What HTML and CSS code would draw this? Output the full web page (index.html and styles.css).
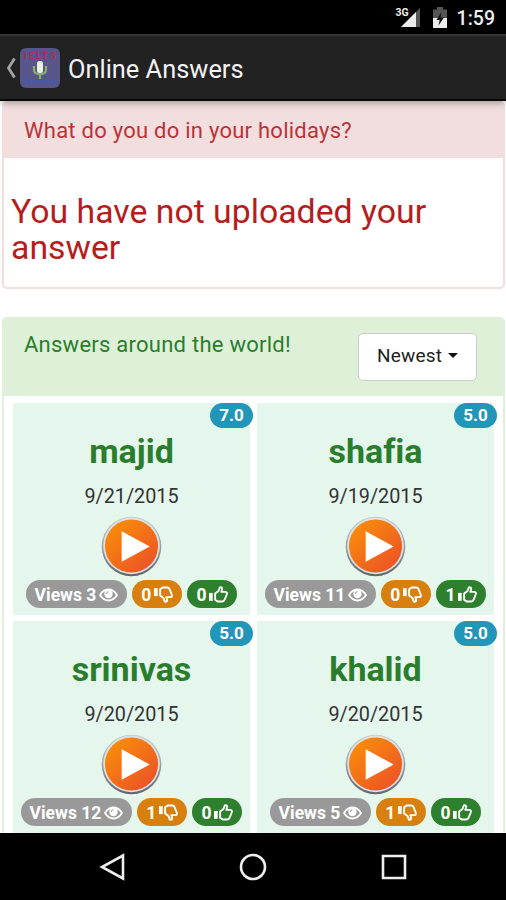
FILE: index.html
```
<!DOCTYPE html>
<html lang="en">
  <head>
    <meta charset="UTF-8" />
    <meta name="viewport" content="width=device-width, initial-scale=1.0" />
    <title>Online Answers</title>
    <link rel="stylesheet" href="styles.css">
  </head>
  <body>
    <!-- Shared icons -->
    <svg class="icon-defs" width="0" height="0">
      <defs>
        <linearGradient id="orange" x1="0.15" y1="0.1" x2="0.85" y2="0.9">
          <stop offset="0" stop-color="#f98c0a" />
          <stop offset="1" stop-color="#ec5426" />
        </linearGradient>
        <linearGradient id="rim" x1="0" y1="0" x2="0" y2="1">
          <stop offset="0" stop-color="#c3ccd0" />
          <stop offset="0.5" stop-color="#9a9fa3" />
          <stop offset="1" stop-color="#606468" />
        </linearGradient>
      </defs>
      <symbol id="play" viewBox="0 0 62 62">
        <circle cx="31" cy="31" r="30.3" fill="url(#rim)" />
        <circle cx="31" cy="30.3" r="28.8" fill="#dde1e5" />
        <circle cx="31" cy="30.5" r="27" fill="url(#orange)" />
        <path d="M21 15.500v31L49.500 31z" fill="#fff" />
      </symbol>
      <symbol id="eye" viewBox="0 0 19 14">
        <path d="M1 7Q4.500 1.500 9.500 1.500T18 7Q14.500 12.500 9.500 12.500T1 7z" fill="none" stroke="#fff" stroke-width="1.800" />
        <circle cx="9.500" cy="6" r="4.200" fill="#fff" />
        <path d="M7.300 6Q7.300 3.900 9.400 3.700" fill="none" stroke="#999" stroke-width="1" />
      </symbol>
      <symbol id="thumb" viewBox="0 0 18 16">
        <path d="M0 6.500h3.500v7.500H0z" fill="#fff" />
        <path d="M5.800 7L9 4.700 10.300 1.200Q12.900 0.700 12.400 3.300L11.700 5.500H15.700Q17.500 5.800 16.800 8L14.700 13Q14.200 14.700 12.500 14.700H8.500L5.800 13z" fill="none" stroke="#fff" stroke-width="1.800" stroke-linejoin="round" />
      </symbol>
    </svg>

    <div class="status-bar">
      <span class="network">3G</span>
      <svg class="signal" width="20" height="19" viewBox="0 0 20 19">
        <path d="M19 0v19H0z" fill="#555" />
        <path d="M15 4v15H0z" fill="#eee" />
      </svg>
      <svg class="battery" width="14" height="21" viewBox="0 0 14 21">
        <path d="M0 2.500h4V0h6v2.500h4V11H0z" fill="#555" />
        <path d="M0 11h14v10H0z" fill="#eee" />
        <path d="M8.500 5L3.500 13h3.200L5.500 18.500 11 10.500H7.500z" fill="#111" />
      </svg>
      <span class="clock">1:59</span>
    </div>

    <div class="app-bar">
      <svg class="back" width="11" height="22" viewBox="0 0 11 22">
        <path d="M9.500 1.500L3.500 11l6 9.500" fill="none" stroke="#a5a5a5" stroke-width="2.800" />
      </svg>
      <div class="logo">
        <span class="logo-text">IELTS</span>
        <svg width="16" height="18" viewBox="0 0 16 18">
          <path d="M2 5v4q0 4 6 4t6-4V5M8 13v5" fill="none" stroke="#86b55f" stroke-width="2.200" />
          <rect x="5" y="0" width="6" height="12" rx="2.500" fill="#eef0dc" />
        </svg>
        <span class="logo-sub">Speaking</span>
      </div>
      <h1>Online Answers</h1>
    </div>

    <div class="content">
      <div class="panel panel-danger">
        <div class="panel-heading">What do you do in your holidays?</div>
        <p class="message">You have not uploaded your answer</p>
      </div>

      <div class="panel panel-success">
        <div class="panel-heading">
          <span>Answers around the world!</span>
          <button class="sort-button">Newest <span class="caret"></span></button>
        </div>
        <div class="answers">
          <div class="answer">
            <span class="score">7.0</span>
            <h2>majid</h2>
            <span class="date">9/21/2015</span>
            <svg class="play"><use href="#play" /></svg>
            <div class="badges">
              <span class="badge views">Views 3 <svg class="eye"><use href="#eye" /></svg></span>
              <span class="badge dislikes">0 <svg class="thumb down"><use href="#thumb" /></svg></span>
              <span class="badge likes">0 <svg class="thumb"><use href="#thumb" /></svg></span>
            </div>
          </div>
          <div class="answer">
            <span class="score">5.0</span>
            <h2>shafia</h2>
            <span class="date">9/19/2015</span>
            <svg class="play"><use href="#play" /></svg>
            <div class="badges">
              <span class="badge views">Views 11 <svg class="eye"><use href="#eye" /></svg></span>
              <span class="badge dislikes">0 <svg class="thumb down"><use href="#thumb" /></svg></span>
              <span class="badge likes">1 <svg class="thumb"><use href="#thumb" /></svg></span>
            </div>
          </div>
          <div class="answer">
            <span class="score">5.0</span>
            <h2>srinivas</h2>
            <span class="date">9/20/2015</span>
            <svg class="play"><use href="#play" /></svg>
            <div class="badges">
              <span class="badge views">Views 12 <svg class="eye"><use href="#eye" /></svg></span>
              <span class="badge dislikes">1 <svg class="thumb down"><use href="#thumb" /></svg></span>
              <span class="badge likes">0 <svg class="thumb"><use href="#thumb" /></svg></span>
            </div>
          </div>
          <div class="answer">
            <span class="score">5.0</span>
            <h2>khalid</h2>
            <span class="date">9/20/2015</span>
            <svg class="play"><use href="#play" /></svg>
            <div class="badges">
              <span class="badge views">Views 5 <svg class="eye"><use href="#eye" /></svg></span>
              <span class="badge dislikes">1 <svg class="thumb down"><use href="#thumb" /></svg></span>
              <span class="badge likes">0 <svg class="thumb"><use href="#thumb" /></svg></span>
            </div>
          </div>
        </div>
      </div>
    </div>

    <div class="nav-bar">
      <svg width="28" height="28" viewBox="0 0 28 28"><path d="M24 2.500v23L3 14z" /></svg>
      <svg width="28" height="28" viewBox="0 0 28 28"><circle cx="14" cy="14" r="12" /></svg>
      <svg width="28" height="28" viewBox="0 0 28 28"><path d="M4 3h22v22H4z" /></svg>
    </div>
  </body>
</html>
```
FILE: styles.css
```
* {
  box-sizing: border-box;
}

body {
  margin: 0;
  height: 900px;
  display: flex;
  flex-direction: column;
  overflow: hidden;
  font-family: Roboto, sans-serif;
  font-variant-ligatures: none;
  background: #fff;
}

.icon-defs {
  position: absolute;
}

.status-bar {
  height: 34px;
  flex: none;
  background: #000;
  color: #eee;
  display: flex;
  justify-content: flex-end;
  align-items: flex-start;
  padding: 7px 11px 0 0;
}

.network {
  font-size: 10.5px;
  font-weight: bold;
  line-height: 11px;
  margin-right: -8px;
  z-index: 1;
}

.signal {
  margin-top: 1px;
}

.battery {
  margin: 0 10px 0 12px;
}

.clock {
  font-size: 19.5px;
  font-weight: 500;
  line-height: 24px;
}

.app-bar {
  height: 67px;
  flex: none;
  display: flex;
  align-items: center;
  padding: 0 5px;
  background: #222;
  border-top: 2px solid #343434;
  border-bottom: 2px solid #090909;
  z-index: 1;
  box-shadow: 0 1px 8px rgba(0, 0, 0, 0.4);
}

.app-bar h1 {
  margin: 2px 0 0 8px;
  color: #f3f3f3;
  font-size: 25.4px;
  font-weight: normal;
}

.logo {
  width: 40px;
  height: 40px;
  margin-left: 4px;
  border-radius: 6px;
  background: #58558a;
  display: flex;
  flex-direction: column;
  align-items: center;
  padding-top: 4px;
}

.logo-text {
  color: #b52a55;
  font-size: 9px;
  font-weight: bold;
  line-height: 9px;
  letter-spacing: 2.2px;
  margin-right: -2px;
}

.logo-sub {
  color: #3f5cae;
  font-size: 8px;
  font-weight: bold;
  line-height: 8px;
  margin-top: -2px;
}

.content {
  flex: 1;
  min-height: 0;
  padding: 0 1px 0 2px;
  overflow: hidden;
}

.panel {
  border: 2px solid #f2dede;
  border-radius: 5px;
  background: #fff;
  overflow: hidden;
}

.panel-heading {
  font-size: 22px;
  letter-spacing: 0.25px;
  line-height: 26px;
  padding: 15px 20px;
}

.panel-danger {
  height: 188px;
  margin-bottom: 28px;
  color: #b71c1c;
}

.panel-danger .panel-heading {
  height: 55px;
  background: #f2dede;
  color: #b93338;
}

.message {
  margin: 36px 7px 0;
  font-size: 33.8px;
  line-height: 36px;
}

.panel-success {
  height: 600px;
  border-color: #dff0d8;
  color: #2a7d2d;
}

.panel-success .panel-heading {
  height: 77px;
  display: flex;
  justify-content: space-between;
  align-items: flex-start;
  padding: 13px 26px 0 20px;
  background: #dff0d8;
}

.sort-button {
  width: 119px;
  height: 48px;
  margin-top: 1px;
  display: flex;
  justify-content: center;
  align-items: center;
  gap: 6px;
  padding: 0 0 3px;
  border: 1px solid #ccc;
  border-radius: 5px;
  background: #fff;
  color: #222;
  font-family: inherit;
  font-size: 19px;
  letter-spacing: 0.2px;
}

.caret {
  border: 5px solid transparent;
  border-top-color: #111;
  border-bottom: 0;
}

.answers {
  display: grid;
  grid-template-columns: 237px 237px;
  grid-auto-rows: 212px;
  gap: 6px 7px;
  padding: 7px 9px;
}

.answer {
  position: relative;
  display: flex;
  flex-direction: column;
  align-items: center;
  background: #e5f6ec;
}

/* score hangs over the right edge of the card */
.score {
  position: absolute;
  top: 0;
  right: -3px;
  width: 43px;
  height: 25px;
  border-radius: 13px;
  background: #2196b9;
  color: #fff;
  font-size: 17px;
  font-weight: bold;
  line-height: 25px;
  text-align: center;
}

.answer h2 {
  margin: 27px 0 0;
  font-size: 34px;
  line-height: 42px;
}

.date {
  margin-top: 13px;
  color: #333;
  font-size: 19.8px;
  line-height: 24px;
}

.play {
  width: 61px;
  height: 61px;
  margin-top: 7px;
}

.badges {
  display: flex;
  gap: 5px;
  margin-top: 3px;
}

.badge {
  min-width: 50px;
  height: 28px;
  display: flex;
  align-items: center;
  justify-content: center;
  gap: 3px;
  padding: 1px 9px 0;
  border-radius: 14px;
  color: #fff;
  font-size: 17.5px;
  font-weight: bold;
  white-space: nowrap;
}

.views {
  background: #999;
}

.dislikes {
  background: #d8800f;
}

.likes {
  background: #2e7f2e;
}

.eye {
  width: 19px;
  height: 14px;
}

.thumb {
  width: 19px;
  height: 17px;
}

.thumb.down {
  transform: scaleY(-1);
}

.nav-bar {
  height: 67px;
  flex: none;
  display: flex;
  justify-content: center;
  align-items: center;
  gap: 112px;
  background: #000;
}

.nav-bar svg {
  fill: none;
  stroke: #eee;
  stroke-width: 2.6;
}
```
